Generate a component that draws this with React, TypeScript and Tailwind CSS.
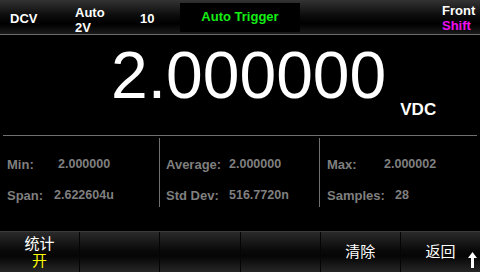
const sans = { fontFamily: '"Liberation Sans", Arial, sans-serif' };
const cjk = { fontFamily: '"Liberation Sans", "Noto Sans CJK SC", sans-serif' };

type Stat = { label: string; value: string; w: string };

const columns: { pad: string; rows: Stat[] }[] = [
  {
    pad: "pl-[7px]",
    rows: [
      { label: "Min:", value: "2.000000", w: "w-[51px]" },
      { label: "Span:", value: "2.622604u", w: "w-[47px]" },
    ],
  },
  {
    pad: "pl-[6px]",
    rows: [
      { label: "Average:", value: "2.000000", w: "w-[63px]" },
      { label: "Std Dev:", value: "516.7720n", w: "w-[63px]" },
    ],
  },
  {
    pad: "pl-[7px]",
    rows: [
      { label: "Max:", value: "2.000002", w: "w-[57px]" },
      { label: "Samples:", value: "28", w: "w-[68px]" },
    ],
  },
];

const SoftKey = ({ top, bottom, last }: { top?: string; bottom?: string; last?: boolean }) => (
  <div
    className={`relative flex-1 flex flex-col items-center justify-center ${last ? "" : "border-r border-[#050505]"}`}
    style={cjk}
  >
    {top && <span className="text-[15px] leading-[16px] text-white">{top}</span>}
    {bottom && <span className="text-[15px] leading-[17px] text-[#ffff00]">{bottom}</span>}
  </div>
);

export default function App() {
  return (
    <div className="w-[480px] h-[272px] bg-black flex flex-col overflow-hidden" style={sans}>
      {/* status bar */}
      <div className="h-[35px] flex border-b border-[#6a6a6a] bg-[linear-gradient(to_bottom,#333_0%,#0c0c0c_45%,#000_70%,#1a1a1a_100%)] text-white font-bold text-[13px]">
        <div className="w-[75px] pl-[10px] pt-[12px] leading-[13px]">DCV</div>
        <div className="w-[65px] pt-[5px] flex flex-col leading-[15px]">
          <span>Auto</span>
          <span>2V</span>
        </div>
        <div className="w-[40px] pt-[12px] leading-[13px]">10</div>
        <div className="w-[120px] mt-[3px] h-[29px] bg-black flex items-center justify-center pb-[3px] text-[#14ee14] leading-[13px]">
          Auto Trigger
        </div>
        <div className="flex-1" />
        <div className="w-[38px] pt-[3px] flex flex-col leading-[15px]">
          <span>Front</span>
          <span className="text-[#f010f0]">Shift</span>
        </div>
      </div>

      {/* main reading */}
      <div className="h-[100px] flex items-start pl-[111px] text-white">
        <span className="mt-[7px] text-[66px] leading-none">2.000000</span>
        <span className="mt-[66px] ml-[14px] text-[17px] leading-none font-bold">VDC</span>
      </div>
      <div className="h-px mx-[3px] bg-[#707070]" />

      {/* statistics */}
      <div className="mt-[2px] h-[69px] flex text-[#7f7f7f] font-bold">
        {columns.map((col, i) => (
          <div
            key={i}
            className={`w-[160px] flex flex-col gap-[18px] pt-[20px] ${col.pad} ${i < 2 ? "border-r border-[#707070]" : ""}`}
          >
            {col.rows.map((r) => (
              <div key={r.label} className="flex leading-[13px]">
                <span className={`${r.w} text-[13px]`}>{r.label}</span>
                <span className="text-[12.5px]">{r.value}</span>
              </div>
            ))}
          </div>
        ))}
      </div>

      <div className="flex-1" />

      {/* soft keys */}
      <div className="relative h-[41px] flex border-t border-[#3a3a3a] bg-[linear-gradient(to_bottom,#2a2a2a_0%,#0a0a0a_45%,#050505_60%,#262626_100%)]">
        <SoftKey top="统计" bottom="开" />
        <SoftKey />
        <SoftKey />
        <SoftKey />
        <SoftKey top="清除" />
        <SoftKey top="返回" last />
        <svg className="absolute right-[3px] bottom-[4px]" width="9" height="16" viewBox="0 0 9 16">
          <path d="M4.5 0 L9 6 L6 6 L6 16 L3 16 L3 6 L0 6 Z" fill="#fff" />
        </svg>
      </div>
    </div>
  );
}
